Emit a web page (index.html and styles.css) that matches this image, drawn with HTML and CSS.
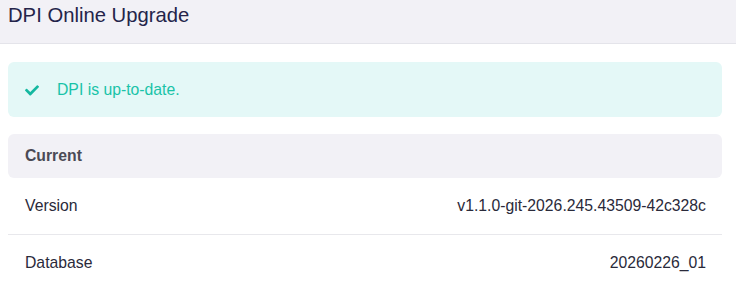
FILE: index.html
```html
<!DOCTYPE html>
<html>
<head>
<meta charset="utf-8">
<link rel="stylesheet" href="styles.css">
</head>
<body>
<header class="topbar"><h1 class="title">DPI Online Upgrade</h1></header>
<main class="content">
  <div class="alert">
    <svg class="check" viewBox="0 0 512 400" width="14" height="11"><path fill="currentColor" d="M173.9 379.4L7.5 213c-10-10-10-26.2 0-36.2l36.2-36.2c10-10 26.2-10 36.2 0L192 252.7 432.1 12.6c10-10 26.2-10 36.2 0l36.2 36.2c10 10 10 26.2 0 36.2L210.1 379.4c-10 10-26.2 10-36.2 0z"/></svg>
    <span>DPI is up-to-date.</span>
  </div>
  <section class="panel">
    <div class="panel-head">Current</div>
    <div class="row"><span>Version</span><span>v1.1.0-git-2026.245.43509-42c328c</span></div>
    <div class="row"><span>Database</span><span>20260226_01</span></div>
  </section>
</main>
</body>
</html>
```
FILE: styles.css
```css
* { box-sizing: border-box; }
html, body { margin: 0; padding: 0; background: #fff; }
body { font-family: "Liberation Sans", Arial, sans-serif; color: #2b2b45; }
.topbar {
  height: 44px;
  background: #f2f1f6;
  border-bottom: 1px solid #e4e4ea;
  padding: 0 8px;
  display: flex;
  align-items: center;
}
.title { margin: 0; font-size: 20.25px; font-weight: normal; color: #24244a; position: relative; top: -6px; }
.content { padding: 18px 14px 0 8px; }
.alert {
  height: 55px;
  background: #e4f8f7;
  border-radius: 6px;
  display: flex;
  align-items: center;
  padding: 0 17px;
  color: #19c3a8;
  font-size: 15.75px;
}
.check { color: #14b8a0; margin-right: 18px; position: relative; top: 1px; }
.panel { margin-top: 17px; }
.panel-head {
  height: 44px;
  background: #f2f1f6;
  border-radius: 6px;
  display: flex;
  align-items: center;
  padding: 0 17px;
  font-weight: bold;
  font-size: 15.75px;
  color: #4a4a55;
}
.row {
  height: 56px;
  display: flex;
  align-items: center;
  justify-content: space-between;
  padding: 0 16px 0 17px;
  font-size: 15.75px;
  color: #2a2a3a;
}
.row + .row { border-top: 1px solid #e8e8ec; }
```
